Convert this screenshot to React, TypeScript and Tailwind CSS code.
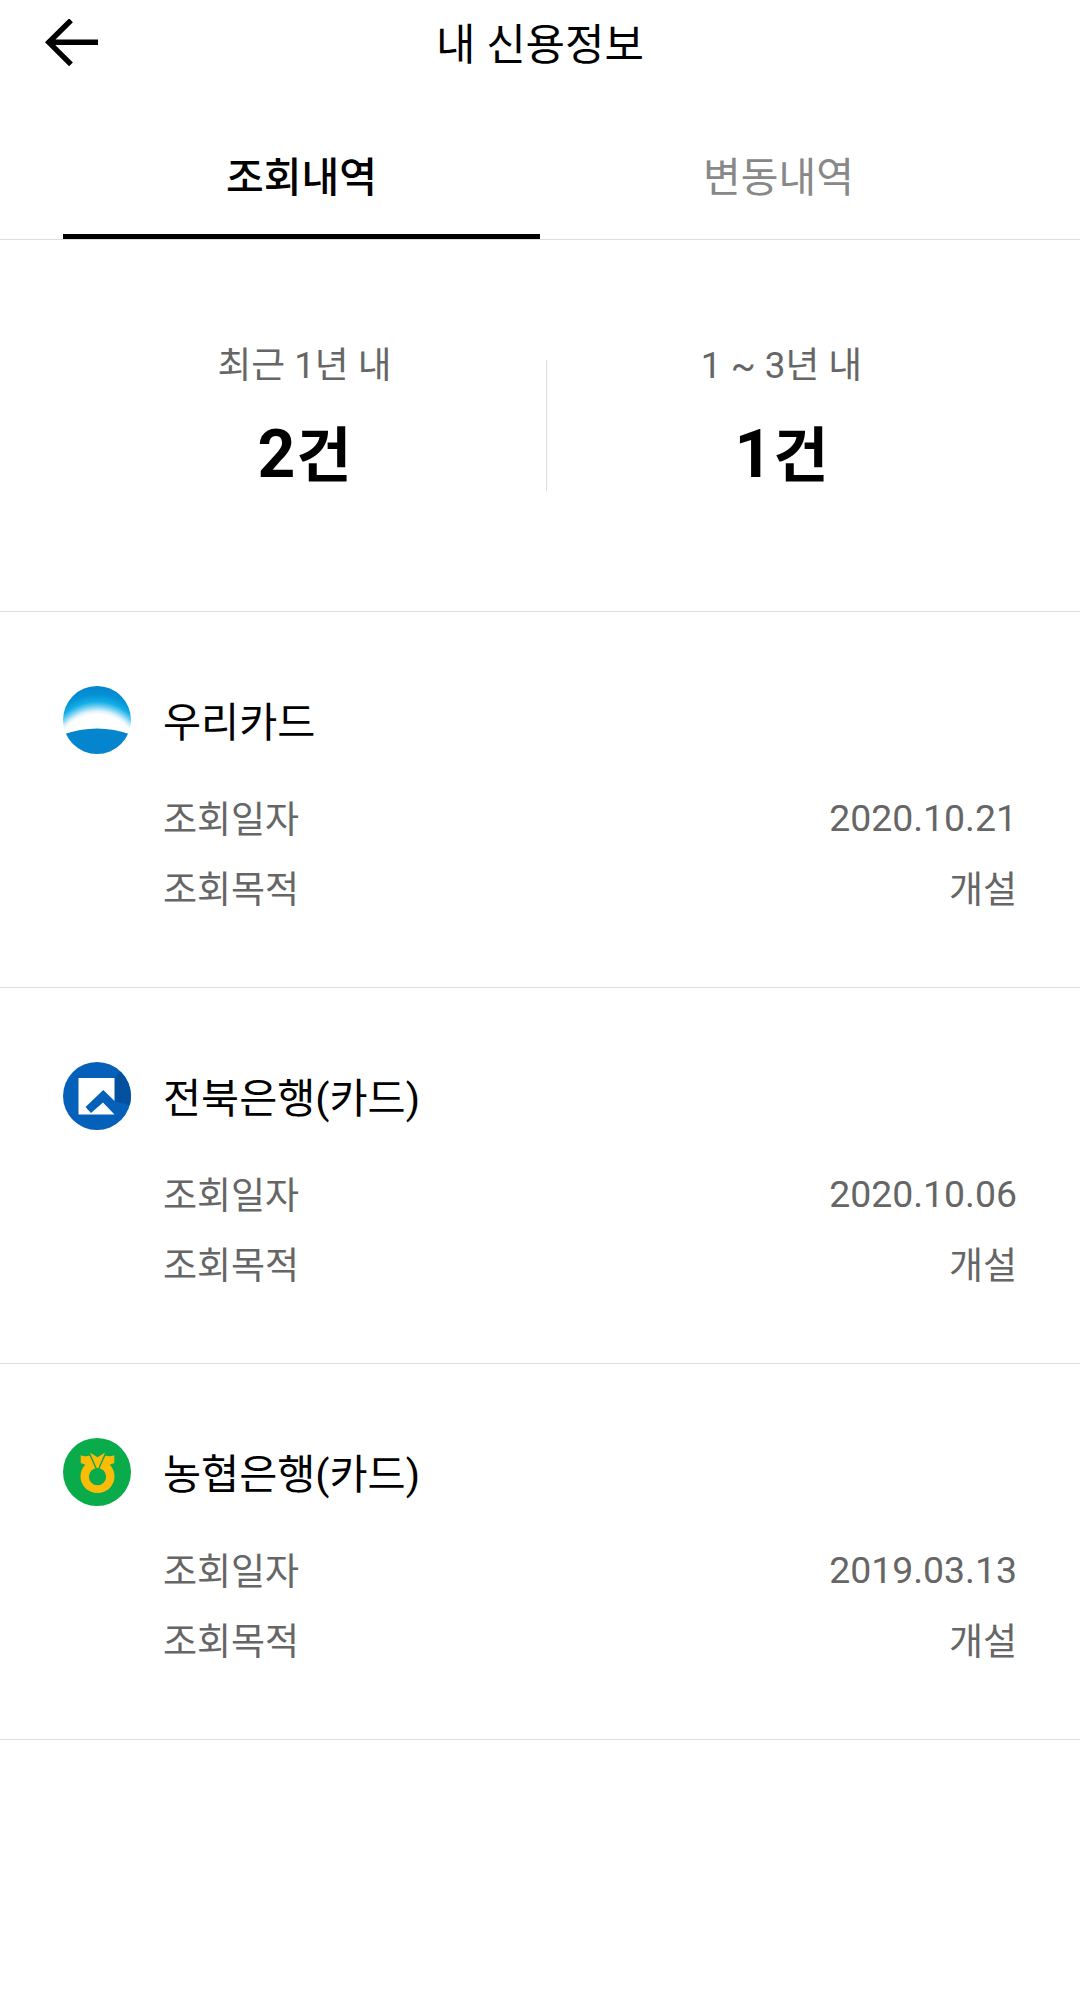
import React from "react";

const WooriLogo = () => (
  <svg viewBox="0 0 68 68" className="size-[68px] shrink-0">
    <defs>
      <clipPath id="woori-clip">
        <circle cx="34" cy="34" r="34" />
      </clipPath>
      <radialGradient id="woori-glow" gradientUnits="userSpaceOnUse" cx="0" cy="0" r="1" gradientTransform="translate(34 84) scale(70 84)">
        <stop offset="0.66" stopColor="#ffffff" />
        <stop offset="0.7" stopColor="#dff4fc" />
        <stop offset="0.76" stopColor="#6fcdf1" />
        <stop offset="0.815" stopColor="#12aee6" />
        <stop offset="0.9" stopColor="#0590d5" />
        <stop offset="1" stopColor="#0585cd" />
      </radialGradient>
    </defs>
    <g clipPath="url(#woori-clip)">
      <rect width="68" height="68" fill="url(#woori-glow)" />
      <path d="M0 48.5Q34 36.5 68 48.5V68H0Z" fill="#0585cd" />
    </g>
  </svg>
);

const JeonbukLogo = () => (
  <svg viewBox="0 0 68 68" className="size-[68px] shrink-0">
    <defs>
      <clipPath id="jb-clip">
        <circle cx="34" cy="34" r="34" />
      </clipPath>
    </defs>
    <g clipPath="url(#jb-clip)">
      <rect width="68" height="68" fill="#0460b9" />
      <path d="M51.5 16L62 5H70V44L51.5 39Z" fill="#03509f" />
      <path d="M15.5 16H51.5V39L40.3 28L22.5 45L28 51L40 40.5L51.5 52.5H15.5Z" fill="#fff" />
    </g>
  </svg>
);

const NonghyupLogo = () => (
  <svg viewBox="0 0 68 68" className="size-[68px] shrink-0">
    <circle cx="34" cy="34" r="34" fill="#0aab4b" />
    <path
      d="M17.7 17.3C20.5 18.6 24 18.5 26.5 17.6L34.5 31L42.5 17.6C45 18.5 48.5 18.6 51.3 17.3V25L46.8 26.8C49.8 30 51.5 34 51.5 38.5A17 16.6 0 0 1 17.5 38.5C17.5 34 19.2 30 22.2 26.8L17.7 25Z"
      fill="#fbbc08"
    />
    <path d="M25.5 13L34.5 18.5L43.5 13L35.2 32H33.8Z" fill="#fbbc08" stroke="#0aab4b" strokeWidth="1.4" />
    <circle cx="34.5" cy="38.7" r="8.6" fill="#0aab4b" />
  </svg>
);

const records = [
  { name: "우리카드", date: "2020.10.21", purpose: "개설", Logo: WooriLogo },
  { name: "전북은행(카드)", date: "2020.10.06", purpose: "개설", Logo: JeonbukLogo },
  { name: "농협은행(카드)", date: "2019.03.13", purpose: "개설", Logo: NonghyupLogo },
];

const summary = [
  { label: "최근 1년 내", count: "2" },
  { label: "1 ~ 3년 내", count: "1" },
];

export default function App() {
  return (
    <div className="flex min-h-[1999px] w-[1080px] flex-col bg-white font-[Roboto,'Noto_Sans_CJK_KR',sans-serif] text-black">
      <header className="grid h-[86px] grid-cols-[1fr_auto_1fr] items-center px-[45px]">
        <button aria-label="뒤로" className="w-fit">
          <svg viewBox="0 0 54 48" className="h-12 w-[54px]" fill="none" stroke="#000" strokeWidth="5.4">
            <path d="M26 1.3L3.8 23.3L26 45.3M4 23.3H53" />
          </svg>
        </button>
        <h1 className="pt-[3px] text-[42.9px] leading-[64px]">내 신용정보</h1>
      </header>

      <nav className="flex h-[154px] border-b border-[#dddddd] px-[63px]">
        <button className="flex w-[477px] items-center justify-center border-b-[5px] border-black pt-[35px] text-[41px] font-medium leading-[60px]">
          조회내역
        </button>
        <button className="flex w-[477px] items-center justify-center pt-[30px] text-[41px] leading-[60px] text-[#888888]">
          변동내역
        </button>
      </nav>

      <section className="flex h-[372px] border-b border-[#dddddd] px-[63px] pt-[99px]">
        {summary.map((s, i) => (
          <div key={s.label} className={i === 0 ? "flex w-[484px]" : "flex w-[469px]"}>
            <div className="flex flex-1 flex-col items-center">
              <span className="text-[36.75px] leading-[54px] text-[#666666]">{s.label}</span>
              <span className="mt-[20px] text-[66px] font-bold leading-[84px]">
                {s.count}
                <span className="ml-px text-[60px]">건</span>
              </span>
            </div>
            {i === 0 && <div className="mt-[21px] h-[131px] w-px bg-[#dddddd]" />}
          </div>
        ))}
      </section>

      <main>
        {records.map(({ name, date, purpose, Logo }) => (
          <article key={name} className="h-[376px] border-b border-[#dddddd] px-[63px] pt-[74px]">
            <div className="flex items-center gap-[32px]">
              <Logo />
              <h2 className="pt-[5px] text-[41.4px] leading-[60px]">{name}</h2>
            </div>
            <dl className="ml-[100px] mt-[32px] text-[37px] leading-[70px] text-[#666666]">
              <div className="flex h-[70px] justify-between">
                <dt>조회일자</dt>
                <dd className="-mt-[3px] text-[37.4px]">{date}</dd>
              </div>
              <div className="flex justify-between">
                <dt>조회목적</dt>
                <dd>{purpose}</dd>
              </div>
            </dl>
          </article>
        ))}
      </main>
    </div>
  );
}
